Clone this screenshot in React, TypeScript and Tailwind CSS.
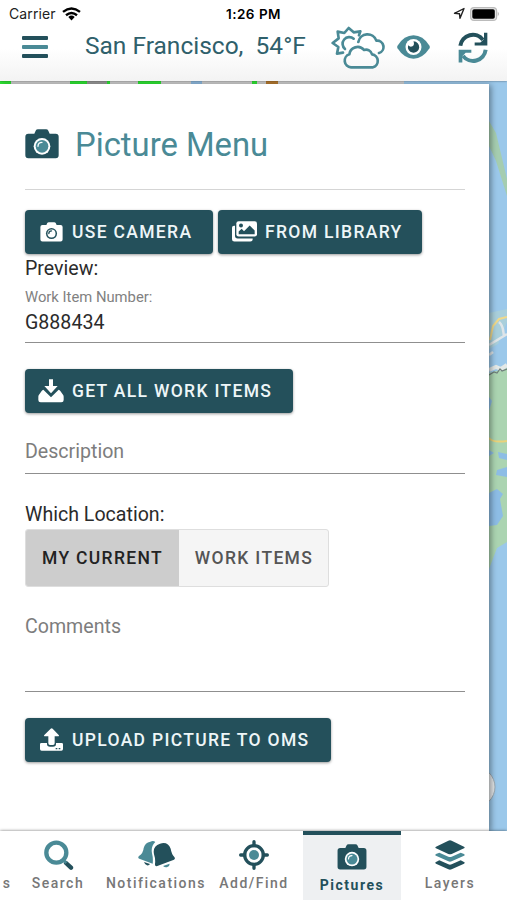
import type { ReactNode } from "react";
import clsx from "clsx";

const DARK = "#23505b";
const TEAL = "#4a8a96";

export default function App() {
  return (
    <div className="flex h-[900px] w-[507px] flex-col overflow-hidden bg-white font-[Roboto,sans-serif] text-[#2b2b2b]">
      <Header />
      <main className="relative h-[750px] shrink-0 overflow-hidden">
        <MapBackdrop />
        <PicturePanel />
      </main>
      <TabBar />
    </div>
  );
}

/* ====== Header ====== */

function Header() {
  return (
    <header className="relative z-10 h-[81px] shrink-0 bg-linear-to-b from-white from-60% to-[#f3f3f3] shadow-[0_0_2px_rgba(0,0,0,0.5)]">
      <div className="grid h-[27px] grid-cols-3 items-center pr-[8px] pl-[9px] font-[Inter,sans-serif] text-[14px] text-[#222]">
        <div className="flex items-center gap-1.5">
          <span className="tracking-[0.1px]">Carrier</span>
          <WifiIcon />
        </div>
        <span className="-ml-px pt-px text-center text-[13.5px] font-semibold tracking-[0.5px] whitespace-nowrap text-black">1:26 PM</span>
        <div className="flex items-center justify-end gap-1">
          <LocationArrow />
          <BatteryIcon />
        </div>
      </div>
      <div className="flex h-[40px] items-center pl-[22px]">
        <MenuIcon />
        <span className="-mt-0.5 ml-[37px] w-[246px] text-[24.5px] leading-[36px] whitespace-pre text-[#2f606b]">San Francisco,  54°F</span>
        <WeatherIcon />
        <EyeIcon />
        <RefreshIcon />
      </div>
    </header>
  );
}

/* ====== Panel ====== */

function PicturePanel() {
  return (
    <section className="relative mt-[3px] h-[747px] w-[489px] bg-white pr-6 pl-[25px] shadow-[2px_1px_6px_rgba(0,0,0,0.4)]">
      <div className="flex h-[106px] items-center border-b border-[#d5d5d5] pt-[15px]">
        <CameraIcon className="h-[30px] w-[34px]" body={DARK} ring="#fff" lens={TEAL} />
        <h1 className="mt-0.5 ml-4 text-[32.8px] leading-8 text-[#4a8a96]">Picture Menu</h1>
      </div>

      <div className="mt-5 flex gap-[5px]">
        <ActionButton className="w-[188px]" icon={<CameraIcon className="h-[20px] w-[23px]" body="#fff" ring={DARK} lens="#fff" thin />}>
          USE CAMERA
        </ActionButton>
        <ActionButton className="w-[204px]" icon={<LibraryIcon />}>FROM LIBRARY</ActionButton>
      </div>

      <p className="h-7 text-[19.6px] leading-[30px]">Preview:</p>

      <div className="h-[61px] border-b border-[#8f8f8f]">
        <label className="block h-[30px] text-[14.8px] leading-[30px] text-[#818181]">Work Item Number:</label>
        <div className="text-[19.6px] leading-[22px]">G888434</div>
      </div>

      <ActionButton className="mt-[26px] w-[268px]" icon={<DownloadIcon />}>GET ALL WORK ITEMS</ActionButton>

      <div className="mt-7 h-[33px] border-b border-[#8f8f8f] text-[19.6px] leading-[22px] text-[#7d7d7d]">Description</div>

      <p className="mt-7 h-6 text-[19.6px] leading-[26px]">Which Location:</p>
      <div className="mt-[3px] flex h-[58px] w-[304px] overflow-hidden rounded-[3px] border border-[#dedede] bg-[#f5f5f5] text-[17.5px] font-medium">
        <button type="button" aria-pressed className="w-[153px] bg-[#cdcdcd] tracking-[1.33px] whitespace-nowrap text-[#222]">
          MY CURRENT
        </button>
        <button type="button" className="flex-1 pl-px tracking-[1.33px] whitespace-nowrap text-[#555]">WORK ITEMS</button>
      </div>

      <div className="mt-[29px] h-[76px] border-b border-[#8f8f8f] text-[19.6px] leading-[22px] text-[#7d7d7d]">Comments</div>

      <ActionButton className="mt-[26px] w-[306px]" icon={<UploadIcon />}>UPLOAD PICTURE TO OMS</ActionButton>
    </section>
  );
}

function ActionButton({ icon, className, children }: { icon: ReactNode; className?: string; children: ReactNode }) {
  return (
    <button
      type="button"
      className={clsx(
        "flex h-11 items-center rounded-[4px] bg-[#24505b] pl-[13px] text-[17.5px] font-medium tracking-[1.32px] whitespace-nowrap text-[#eef6f8] shadow-[0_1px_3px_rgba(0,0,0,0.4)]",
        className
      )}
    >
      <span className="mr-[8px] flex w-[26px] shrink-0 justify-center pb-px">{icon}</span>
      {children}
    </button>
  );
}

/* ====== Tabs ====== */

function TabBar() {
  return (
    <nav className="relative z-10 flex h-[69px] shrink-0 bg-white text-[14px] font-medium text-[#777] shadow-[0_0_3px_rgba(0,0,0,0.55)]">
      <div className="flex w-[10px] shrink-0 justify-end pt-[43px] leading-[18px]">s</div>
      <Tab label="Search" icon={<SearchIcon />} />
      <Tab label="Notifications" icon={<BellsIcon />} />
      <Tab label="Add/Find" icon={<TargetIcon />} />
      <Tab label="Pictures" active icon={<CameraIcon className="h-[26px] w-[30px]" body={DARK} ring="#fff" lens={TEAL} />} />
      <Tab label="Layers" icon={<LayersIcon />} />
    </nav>
  );
}

function Tab({ label, icon, active }: { label: string; icon: ReactNode; active?: boolean }) {
  return (
    <button
      type="button"
      className={clsx(
        "-ml-px mr-px flex w-[98px] shrink-0 flex-col items-center tracking-[1.5px]",
        active ? "border-t-4 border-[#23505b] bg-[#eef0f2] pt-[5px] font-bold text-[#23505b]" : "pt-[7px]"
      )}
    >
      <span className="flex h-[34px] items-center">{icon}</span>
      <span className="mt-0.5 leading-[18px] whitespace-nowrap">{label}</span>
    </button>
  );
}

/* ====== Map ====== */

function MapBackdrop() {
  return (
    <svg className="absolute inset-0" width="507" height="750" viewBox="0 81 507 750">
      <rect y="81" width="507" height="750" fill="#9bc8ea" />
      <rect y="81" width="404" height="4" fill="#cfcfcf" />
      <path d="M0 81h11v4H0zM70 81h40v4H70zM138 81h23v4h-23zM252 81h5v4h-5z" fill="#2fe634" />
      <path d="M87 81h20v4H87z" fill="#999" />
      <path d="M191 81h11v4h-11z" fill="#8fbbe0" />
      <path d="M266 81h12v4h-12z" fill="#b57a30" />
      <path d="M489 121l7 12 11 46v17l-11-35-7-15z" fill="#a5cdb0" />
      <path d="M489 313l18-4v13l-9 22-9 5z" fill="#a9cfdb" />
      <path d="M490 340l3-14 6-7 8-2" fill="none" stroke="#f0d98b" strokeWidth="2" />
      <path d="M499 322c5 4 4 10 5 14M489 345l18-11M489 355l4-3" fill="none" stroke="#dfe5e8" strokeWidth="2.5" />
      <path d="M489 373l18-5v174l-10 6-8 21z" fill="#abd4b1" />
      <path d="M489 370l7-3 5 2 6-4" fill="none" stroke="#e4e9e7" strokeWidth="4" />
      <path d="M489 375l5-3 3 1 3-4 2 2 5-2" fill="none" stroke="#6f7f7b" strokeWidth="1.2" />
      <path d="M489 438q4 5 18 3" fill="none" stroke="#ead27a" strokeWidth="2" />
      <path d="M489 397l3 4-3 10zM498 452l9 2v6l-8-2zM489 450l5 3-5 3zM497 470l10-3v10l-11-2zM489 493l8-4 6 5-3 5 3 17-6 9-8 1z" fill="#8dbde5" />
      <circle cx="475" cy="787" r="20" fill="#e3e6e8" stroke="#9cabb5" strokeWidth="1" />
    </svg>
  );
}

/* ====== Icons ====== */

function WifiIcon() {
  return (
    <svg width="19" height="14" viewBox="0 0 19 14" fill="none" stroke="#000" strokeWidth="2.4">
      <path d="M1 4.9Q9.500-1.900 18 4.900M4 8.200Q9.500 3.700 15 8.200" />
      <path d="M6.300 10Q9.500 7.200 12.700 10L9.500 13.600Z" fill="#000" stroke="none" />
    </svg>
  );
}

function LocationArrow() {
  return (
    <svg width="13" height="13" viewBox="0 0 13 13" fill="none" stroke="#222" strokeWidth="1.4" strokeLinejoin="round">
      <path d="M1.500 6.300L11 1.500L7 11.300L6.500 6.800Z" />
    </svg>
  );
}

function BatteryIcon() {
  return (
    <svg className="-mr-[1px]" width="30" height="14" viewBox="0 0 30 14">
      <rect x=".6" y=".6" width="26" height="12.800" rx="3.500" fill="#e6e6e6" stroke="#bbb" strokeWidth="1.200" />
      <rect x="2.300" y="2.300" width="22.500" height="9.400" rx="1.800" fill="#000" />
      <path d="M27.800 4.800q2 2.200 0 4.400z" fill="#aaa" />
    </svg>
  );
}

function MenuIcon() {
  return (
    <svg className="shrink-0" width="26" height="24" viewBox="0 0 26 24">
      <rect y="1" width="26" height="4" rx="1" fill={DARK} />
      <rect y="10" width="26" height="4" rx="1" fill={TEAL} />
      <rect y="19" width="26" height="4" rx="1" fill={DARK} />
    </svg>
  );
}

function WeatherIcon() {
  return (
    <svg className="shrink-0" width="54" height="43" viewBox="230 76 162 129" fill="none" stroke={TEAL} strokeWidth="8" strokeLinejoin="round" strokeLinecap="round">
      <path d="M314 104l4-12-20 3-15-13-13 15-20-4 3 20-18 14 17 12-4 20 18-3" />
      <path d="M298 114a19 19 0 1 0-26 31" />
      <path d="M312 124a28 28 0 0 1 54-4a19 19 0 0 1 8 37" />
      <path d="M290 200a20 20 0 0 1-5-39a25 25 0 0 1 44-13a18 18 0 0 1 24 13a20 20 0 0 1 3 39z" />
    </svg>
  );
}

function EyeIcon() {
  return (
    <svg className="ml-3 shrink-0" width="33" height="24" viewBox="430 106 98 72">
      <path d="M431 138q20-31 48-31t48 31q2 4 0 8q-20 31-48 31t-48-31q-2-4 0-8z" fill={TEAL} />
      <circle cx="479" cy="142" r="24" fill="#fff" />
      <path d="M479 125a17 17 0 1 1-16 12q6 7 13 3t3-15z" fill={DARK} />
    </svg>
  );
}

function RefreshIcon() {
  return (
    <svg className="ml-[28px] shrink-0" width="30" height="31" viewBox="611 96 90 92" fill="none" strokeWidth="12">
      <path d="M618 137a38 38 0 0 1 68-18" stroke={DARK} />
      <path d="M699 98v38h-38v-9h17l11-10v-19z" fill={DARK} />
      <path d="M694 149a38 38 0 0 1-68 18" stroke={TEAL} />
      <path d="M613 187v-38h38v9h-17l-10 10v19z" fill={TEAL} />
    </svg>
  );
}

function CameraIcon({ className, body, ring, lens, thin }: { className?: string; body: string; ring: string; lens: string; thin?: boolean }) {
  return (
    <svg className={className} viewBox="0 0 102 90">
      <path d="M10 14h18l4-9q2-4 7-4h24q5 0 7 4l4 9h18q9 0 9 9v56q0 9-9 9H10q-9 0-9-9V23q0-9 9-9z" fill={body} />
      <circle cx="51" cy="52" r="25" fill={ring} />
      <circle cx="51" cy="52" r={thin ? 18 : 19} fill={lens} />
      <path d="M39 52q0-12 12-12" fill="none" stroke={ring} strokeWidth={thin ? 6 : 4} strokeLinecap="round" />
    </svg>
  );
}

function LibraryIcon() {
  return (
    <svg width="25" height="21" viewBox="0 0 75 62">
      <path d="M9 14H6q-6 0-6 6v34q0 7 7 7h48q7 0 7-6v-3H17q-8 0-8-8z" fill="#fff" />
      <path d="M20 0h48q7 0 7 7v32q0 7-7 7H20q-7 0-7-7V7q0-7 7-7z" fill="#fff" />
      <circle cx="27" cy="13" r="6" fill={DARK} />
      <path d="M20 39v-8l9-8 7 7 17-17 15 15v11z" fill={DARK} />
    </svg>
  );
}

function DownloadIcon() {
  return (
    <svg width="26" height="24" viewBox="0 0 78 72" fill="#fff">
      <path d="M33 1h12v20h14L39 43 19 21h14z" />
      <path d="M16 32l23 23 23-23q3 1 5 4l9 13q1 2 1 5v9q0 7-7 7H8q-7 0-7-7v-9q0-3 1-5l9-13q2-3 5-4z" />
    </svg>
  );
}

function UploadIcon() {
  return (
    <svg width="23" height="23" viewBox="0 0 69 69" fill="#fff">
      <path d="M25 46V25H14q-4 0-1-4L32 2q3-2 6 0l18 19q3 4-1 4H44v21q0 5-5 5h-9q-5 0-5-5z" />
      <path d="M4 45h17v3q0 8 9 8h9q9 0 9-8v-3h17q4 0 4 4v14q0 5-5 5H5q-5 0-5-5V49q0-4 4-4z" />
      <path d="M47 62h5m4 0h5" stroke={DARK} strokeWidth="4" />
    </svg>
  );
}

function SearchIcon() {
  return (
    <svg className="ml-0.5" width="30" height="30" viewBox="0 0 90 90" fill="none">
      <path d="M66 69l15 14" stroke={DARK} strokeWidth="13" strokeLinecap="round" />
      <path d="M58 60l9 9" stroke={TEAL} strokeWidth="9" />
      <circle cx="37" cy="38" r="30" stroke={TEAL} strokeWidth="13" />
    </svg>
  );
}

function BellsIcon() {
  return (
    <svg width="37" height="28" viewBox="0 0 111 84">
      <path d="M37 2q9-4 15 1q-14 13-10 34q4 15 2 31L4 53q-6-3-1-8q13-9 14-24q4-16 20-19z" fill={TEAL} />
      <path d="M18 63l18 6q-3 5-9 4t-9-10z" fill={DARK} />
      <path d="M66 8q24-7 32 15q3 17 11 25q4 5-1 8L58 75q-8 2-7-6q2-14-3-29q-5-25 18-32z" fill={DARK} />
      <path d="M75 75l20-7q0 8-7 10t-13-3z" fill={TEAL} />
    </svg>
  );
}

function TargetIcon() {
  return (
    <svg width="30" height="30" viewBox="0 0 90 90" fill="none">
      <circle cx="45" cy="45" r="28" stroke={DARK} strokeWidth="10" />
      <path d="M45 5v12m0 56v12M5 45h12m56 0h12" stroke={DARK} strokeWidth="10" strokeLinecap="round" />
      <circle cx="45" cy="45" r="15" fill={TEAL} />
    </svg>
  );
}

function LayersIcon() {
  return (
    <svg width="30" height="30" viewBox="0 0 90 90">
      <path d="M3 20L40 2q5-2 10 0l37 18q4 3 0 5L50 42q-5 2-10 0L3 25q-4-2 0-5z" fill={DARK} />
      <path d="M3 42l10-4 27 12q5 2 10 0l27-12 10 4q4 3 0 5L50 64q-5 2-10 0L3 47q-4-2 0-5z" fill={TEAL} />
      <path d="M3 66l10-5 27 12q5 2 10 0l27-12 10 5q4 2 0 5L50 88q-5 2-10 0L3 71q-4-3 0-5z" fill={DARK} />
    </svg>
  );
}
